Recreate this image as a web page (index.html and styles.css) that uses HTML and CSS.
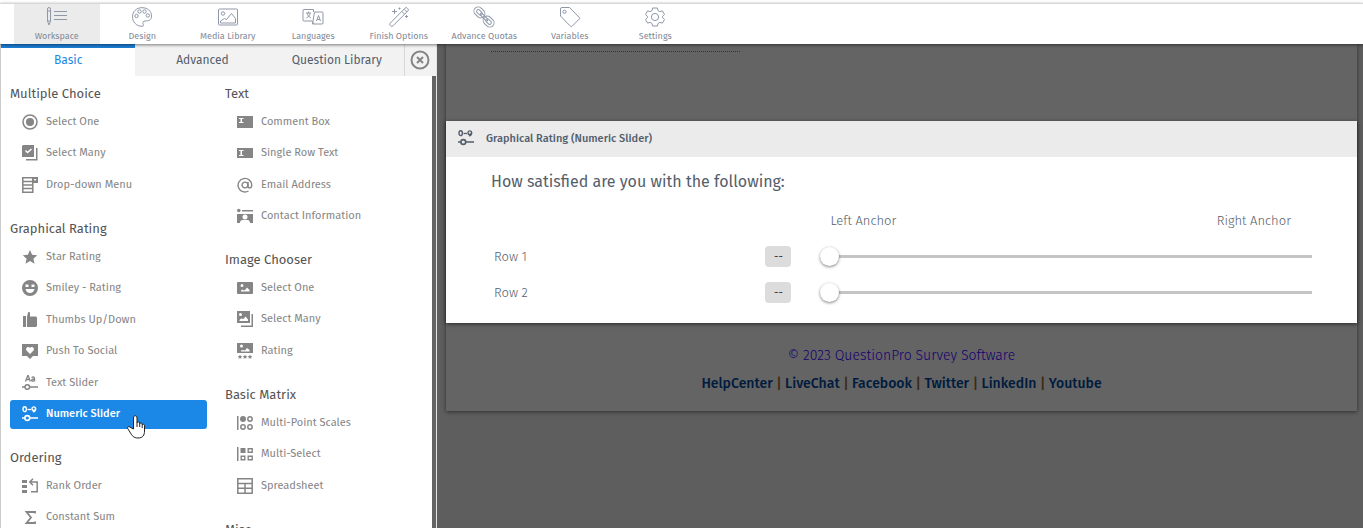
FILE: index.html
```html
<!DOCTYPE html>
<html lang="en">
<head>
  <meta charset="utf-8">
  <title>Survey Workspace</title>
  <link rel="stylesheet" href="styles.css">
</head>
<body>
  <!-- icons used more than once -->
  <svg class="defs" aria-hidden="true">
    <symbol id="numeric" viewBox="0 0 16 16">
      <g fill="none" stroke="currentColor">
        <ellipse cx="2.700" cy="3.200" rx="1.700" ry="2.400" stroke-width="1.400"/>
        <path d="M5.500 3.500h3.500" stroke-width="1.300"/>
        <circle cx="11.800" cy="2.700" r="1.800" stroke-width="1.400"/>
        <path d="M13.600 2.700c0 2-.8 3-2.800 3.200" stroke-width="1.400"/>
        <circle cx="5.300" cy="12" r="2.400" stroke-width="1.600"/>
        <path d="M0 12h3M7.600 12H16" stroke-width="1.600"/>
      </g>
    </symbol>
    <symbol id="picture" viewBox="0 0 16 16">
      <path fill="currentColor" fill-rule="evenodd" d="M1 2h14a1 1 0 0 1 1 1v10a1 1 0 0 1-1 1H1a1 1 0 0 1-1-1V3a1 1 0 0 1 1-1zM3.500 5.500a1.500 1.500 0 1 0 3 0 1.500 1.500 0 1 0-3 0zM4 11.500h8.500V10L10 7.500l-2 2.500-1 .5-1.500-1L4 10.500z"/>
    </symbol>
  </svg>

  <header>
    <nav class="toolbar">
      <a href="#" class="current">
        <svg viewBox="0 0 20 20"><path d="M.5 2a1.500 1.500 0 0 1 3 0v12L2 18 .5 14zM.5 4h3M.5 14h3M7 4.500h13M7 8.500h13M7 12.500h13"/></svg>
        Workspace
      </a>
      <a href="#">
        <svg viewBox="0 0 20 20"><path d="M10 .7C4.500.7.5 4.500.5 9.500c0 5.500 4 9.800 9.500 9.800 2 0 1.500-1.800 1-2.800-.5-1.500.5-2.500 2-2.500 4 0 6.500-1 6.500-5C19.500 4 15.500.7 10 .7z"/><circle cx="4.500" cy="9" r="1.700"/><circle cx="7.500" cy="4.500" r="1.700"/><circle cx="12.500" cy="4.500" r="1.700"/><circle cx="15.800" cy="8.500" r="1.700"/></svg>
        Design
      </a>
      <a href="#">
        <svg viewBox="0 0 20 20"><rect x=".5" y="2" width="19" height="16" rx="1"/><circle cx="5" cy="6.500" r="1.700"/><path d="M2.500 16v-2l4-2.500 2 1 5-6 4 5V16z"/></svg>
        Media Library
      </a>
      <a href="#">
        <svg viewBox="0 0 20 20"><path d="M9 14H1a1 1 0 0 1-1-1V3.500a1 1 0 0 1 1-1h9.500V5M11.500 5H19a1 1 0 0 1 1 1v10a1 1 0 0 1-1 1H9.500zM3 6h5M5.500 4.500V6M3.500 11c2-1 3.500-3 3.500-5M4 6c.5 2 2 4 4 5M13.500 14l2-5.500 2 5.500M14.200 12.500h2.600M9 14l2 3"/></svg>
        Languages
      </a>
      <a href="#">
        <svg viewBox="0 0 20 20"><path d="M1.200 16.200 16 1.200a1.500 1.500 0 0 1 2.300 0l.5.500a1.500 1.500 0 0 1 0 2.300L4 18.800a1.500 1.500 0 0 1-2.300 0l-.5-.5a1.500 1.500 0 0 1 0-2.100zM12.800 4.400l2.800 2.800M15 2.200l2.800 2.800M5.500 2v5M3 4.500h5M10.500.5v2M9.500 1.500h2M17.500 8v3M16 9.500h3"/></svg>
        Finish Options
      </a>
      <a href="#">
        <svg viewBox="0 0 20 20"><g transform="rotate(45 10 10)"><rect x="-2.500" y="5.800" width="12" height="8.400" rx="4.200"/><rect x="10.500" y="5.800" width="12" height="8.400" rx="4.200"/><rect x=".3" y="8.300" width="6.500" height="3.400" rx="1.700"/><rect x="13.200" y="8.300" width="6.500" height="3.400" rx="1.700"/><rect x="5" y="8.800" width="10" height="2.400" rx="1.200"/></g></svg>
        Advance Quotas
      </a>
      <a href="#">
        <svg viewBox="0 0 20 20"><path d="M.5 2a1.500 1.500 0 0 1 1.500-1.500h7.500L19.300 10.500a1 1 0 0 1 0 1.500L12 19.300a1 1 0 0 1-1.500 0L.5 9z"/><circle cx="4.500" cy="4.800" r="1.600"/></svg>
        Variables
      </a>
      <a href="#">
        <svg viewBox="0 0 20 20"><path d="M7.600 1 12.400 1 13 3.600 14.800 4.600 17.400 3.900 19.500 7.500 17.600 9.200V10.800L19.500 12.500 17.400 16.100 14.800 15.400 13 16.400 12.400 19H7.600L7 16.400 5.200 15.400 2.600 16.100.5 12.500 2.400 10.800V9.200L.5 7.500 2.600 3.900 5.200 4.600 7 3.600z" stroke-linejoin="round"/><circle cx="10" cy="10" r="3.600"/></svg>
        Settings
      </a>
    </nav>
  </header>

  <div class="workspace">
    <aside>
      <div class="tabs">
        <button class="active">Basic</button>
        <button>Advanced</button>
        <button>Question Library</button>
        <button class="close" aria-label="Close">
          <svg viewBox="0 0 20 20"><circle cx="10" cy="10" r="8.500"/><path d="M7 7l6 6M13 7l-6 6"/></svg>
        </button>
      </div>

      <div class="panel">
        <div class="column">
          <section>
            <h3>Multiple Choice</h3>
            <ul>
              <li><a href="#"><svg viewBox="0 0 16 16"><circle cx="8" cy="8" r="7" fill="none" stroke="currentColor" stroke-width="1.500"/><circle cx="8" cy="8" r="4"/></svg>Select One</a></li>
              <li><a href="#"><svg viewBox="0 0 16 16"><path fill-rule="evenodd" d="M1 0h11v12H0V1zM3 6l2.500 2.500 4.500-4-1-1-3.500 3L4 5z"/><path d="M14 3h1.500v12.500H4V14h10z"/></svg>Select Many</a></li>
              <li><a href="#"><svg viewBox="0 0 16 16"><path fill="none" stroke="currentColor" stroke-width="1.500" d="M.8.8h10v14.500H.8zM1 4.500h10M1 8h10M1 11.500h10"/><path fill-rule="evenodd" d="M10 0h6v6h-6zM11.500 2l1.500 2 1.500-2z"/></svg>Drop-down Menu</a></li>
            </ul>
          </section>
          <section>
            <h3>Graphical Rating</h3>
            <ul>
              <li><a href="#"><svg viewBox="0 0 16 16"><path d="M8 1l2.100 4.700 5.100.5-3.800 3.500 1.100 5L8 12.100l-4.500 2.600 1.100-5L.8 6.200l5.100-.5z"/></svg>Star Rating</a></li>
              <li><a href="#"><svg viewBox="0 0 16 16"><path fill-rule="evenodd" d="M8 0a8 8 0 1 0 0 16A8 8 0 0 0 8 0zM3.500 4.500h3V7h-3zM9.500 4.500h3V7h-3zM3.500 9h9c-.5 2.700-2.200 4-4.500 4s-4-1.300-4.500-4z"/></svg>Smiley - Rating</a></li>
              <li><a href="#"><svg viewBox="0 0 16 16"><path d="M1 4h3v11H1zM5 5l1-4.500C6.300-.5 8-.3 8 1v3.500h6l1 1V14l-1 1H5z"/></svg>Thumbs Up/Down</a></li>
              <li><a href="#"><svg viewBox="0 0 16 16"><path fill-rule="evenodd" d="M0 1h16v12h-5l-3 3-3-3H0zM8 11l3.500-3.500c1.500-2-1.500-5-3.500-2.500C6 2.500 3 5.500 4.500 7.500z"/></svg>Push To Social</a></li>
              <li><a href="#"><svg viewBox="0 0 16 16"><path fill="none" stroke="currentColor" stroke-width="1.300" d="M3.500 6.500 6 0l2.300 6.500M4.200 4.500h3.500M9.500 2.500c2-1 3-.3 3 1v3M12.500 4c-4 0-3.500 3-.5 2"/><path fill="none" stroke="currentColor" stroke-width="1.500" d="M0 12h3M7.600 12H16"/><circle cx="5.300" cy="12" r="2.300" fill="none" stroke="currentColor" stroke-width="1.500"/></svg>Text Slider</a></li>
              <li><a href="#" class="selected"><svg><use href="#numeric"/></svg>Numeric Slider
                <svg class="pointer" viewBox="0 0 18 24"><path d="M6.500 14V3c0-3 3.500-3 3.500 0v5c0-1.500 2.700-1.500 2.700 0v1c0-1.500 2.500-1.200 2.500.3V10c0-1.300 2.300-1 2.300.5V16c0 4-1.500 7-6.500 7-4.500 0-6-2.500-7.500-5L.7 13.500c-.8-1.800 1.300-2.500 2.500-1.200z"/><path d="M10 8v4M12.700 9v3M15.200 10v3"/></svg></a></li>
            </ul>
          </section>
          <section>
            <h3>Ordering</h3>
            <ul>
              <li><a href="#"><svg viewBox="0 0 16 16"><path d="M0 2h5v3H0zM0 7h5v3H0zM0 12h5v3H0z"/><path fill="none" stroke="currentColor" stroke-width="1.500" d="M9 13.800h6.200V4H8M11 .8 7.800 4 11 7.200"/></svg>Rank Order</a></li>
              <li><a href="#"><svg viewBox="0 0 16 16"><path fill="none" stroke="currentColor" stroke-width="1.800" d="M13 4.500V3H4.500L9 8.500 4.500 14H13v-1.500"/></svg>Constant Sum</a></li>
            </ul>
          </section>
        </div>

        <div class="column">
          <section>
            <h3>Text</h3>
            <ul>
              <li><a href="#"><svg viewBox="0 0 16 16"><path fill-rule="evenodd" d="M0 2h16v12H0zM2 4v1h1.500v3H2v1h4.500V8H5V5h1.500V4z"/></svg>Comment Box</a></li>
              <li><a href="#"><svg viewBox="0 0 16 16"><path fill-rule="evenodd" d="M0 3h16v10H0zM2 5v1h1.500v4H2v1h4.500v-1H5V6h1.500V5z"/></svg>Single Row Text</a></li>
              <li><a href="#"><svg viewBox="0 0 16 16"><path fill="none" stroke="currentColor" stroke-width="1.400" d="M11.500 14A6.800 6.800 0 1 1 14.700 8c0 4-3.700 3.500-3.700 1V5"/><circle cx="8" cy="8" r="2.900" fill="none" stroke="currentColor" stroke-width="1.400"/></svg>Email Address</a></li>
              <li><a href="#"><svg viewBox="0 0 16 16"><circle cx="1.800" cy="2.500" r="1.800"/><path d="M5 2h11v1.500H5z"/><path fill-rule="evenodd" d="M0 6h16v9h-3c0-1.500-.5-2.500-2-3H5c-1.500.5-2 1.500-2 3H0zM5.500 9a2.500 2.500 0 1 0 5 0 2.500 2.500 0 1 0-5 0z"/></svg>Contact Information</a></li>
            </ul>
          </section>
          <section>
            <h3>Image Chooser</h3>
            <ul>
              <li><a href="#"><svg><use href="#picture"/></svg>Select One</a></li>
              <li><a href="#"><svg viewBox="0 0 16 16"><path fill-rule="evenodd" d="M0 0h13v12H0zM2 3.500a1.500 1.500 0 1 0 3 0 1.500 1.500 0 1 0-3 0zM2.500 10H11V8.500L8.500 5.500 6.500 8 4 7.500 2.500 9z"/><path d="M14.500 3H16v13H4v-1.500h10.500z"/></svg>Select Many</a></li>
              <li><a href="#"><svg viewBox="0 0 16 16"><path fill-rule="evenodd" d="M0 0h16v10H0zM3 3a1.500 1.500 0 1 0 3 0 1.500 1.500 0 1 0-3 0zM4 8.500h8.500V7L10 5 8 7.500 6 7 4 7.500z"/><path d="M3 11.500l.7 1.500 1.500.2-1 1 .2 1.600L3 15l-1.400.8.2-1.600-1-1 1.500-.2zM8 11.500l.7 1.500 1.500.2-1 1 .2 1.600L8 15l-1.400.8.2-1.600-1-1 1.500-.2zM13 11.500l.7 1.500 1.500.2-1 1 .2 1.600L13 15l-1.400.8.2-1.600-1-1 1.500-.2z"/></svg>Rating</a></li>
            </ul>
          </section>
          <section>
            <h3>Basic Matrix</h3>
            <ul>
              <li><a href="#"><svg viewBox="0 0 16 16"><path d="M0 1h1.500v14H0z"/><circle cx="6" cy="4" r="3"/><g fill="none" stroke="currentColor" stroke-width="1.500"><circle cx="13" cy="4" r="2.200"/><circle cx="6" cy="12" r="2.200"/><circle cx="13" cy="12" r="2.200"/></g></svg>Multi-Point Scales</a></li>
              <li><a href="#"><svg viewBox="0 0 16 16"><path d="M0 1h1.500v14H0zM3.500 2h5v5h-5z"/><path fill="none" stroke="currentColor" stroke-width="1.400" d="M11.200 2.700h4v3.600h-4zM4.200 10.200h3.600v3.600H4.200zM11.200 10.200h4v3.600h-4z"/></svg>Multi-Select</a></li>
              <li><a href="#"><svg viewBox="0 0 16 16"><path fill="none" stroke="currentColor" stroke-width="1.500" d="M.8.8h14.400v14.400H.8zM1 5.500h14M1 10.300h14M8 5.500V15"/></svg>Spreadsheet</a></li>
            </ul>
          </section>
          <section>
            <h3>Misc</h3>
          </section>
        </div>
      </div>
    </aside>

    <main>
      <div class="survey">
        <div class="previous"><div class="answer-line"></div></div>

        <article class="question">
          <h2><svg><use href="#numeric"/></svg>Graphical Rating (Numeric Slider)</h2>
          <div class="question-body">
            <p class="question-text">How satisfied are you with the following:</p>
            <div class="anchors"><span>Left Anchor</span><span>Right Anchor</span></div>
            <div class="row">
              <label for="row1">Row 1</label>
              <output for="row1">--</output>
              <input type="range" id="row1" min="0" max="100" value="0">
            </div>
            <div class="row">
              <label for="row2">Row 2</label>
              <output for="row2">--</output>
              <input type="range" id="row2" min="0" max="100" value="0">
            </div>
          </div>
        </article>

        <footer>
          <p><a href="#" class="copyright">© 2023 QuestionPro Survey Software</a></p>
          <p class="links"><a href="#">HelpCenter</a> | <a href="#">LiveChat</a> | <a href="#">Facebook</a> | <a href="#">Twitter</a> | <a href="#">LinkedIn</a> | <a href="#">Youtube</a></p>
        </footer>
      </div>
    </main>
  </div>
</body>
</html>
```
FILE: styles.css
```css
* {
  box-sizing: border-box;
}
body {
  margin: 0;
  height: 100vh;
  display: flex;
  flex-direction: column;
  overflow: hidden;
  font-family: "Fira Sans", Roboto, sans-serif;
  font-size: 11px;
  color: #545e6b;
  background-color: #fff;
}
h2, h3, p, ul {
  margin: 0;
  padding: 0;
}
ul {
  list-style: none;
}
a {
  color: inherit;
  text-decoration: none;
}
.defs {
  display: none;
}

/* top toolbar */
header {
  position: relative;
  z-index: 1;
  margin-top: 3px;
  padding-left: 14px;
  border-top: 1px solid #d8d8d8;
  background-color: #fff;
  box-shadow: 0 1px 3px rgba(0, 0, 0, .5);
}
.toolbar {
  width: 684px;
  display: grid;
  grid-template-columns: repeat(8, 1fr);
}
.toolbar a {
  height: 40px;
  padding-top: 3px;
  display: flex;
  flex-direction: column;
  align-items: center;
  gap: 3px;
  font-size: 9px;
  line-height: 12px;
  white-space: nowrap;
  color: #7f8a99;
}
.toolbar .current {
  background-color: #ebebeb;
}
.toolbar svg {
  width: 20px;
  height: 20px;
  overflow: visible;
  fill: none;
  stroke: #8f98a8;
}

.workspace {
  flex: 1;
  min-height: 0;
  display: flex;
}

/* question type picker */
aside {
  width: 437px;
  flex-shrink: 0;
  display: flex;
  flex-direction: column;
  overflow: hidden;
  border-left: 1px solid #ccc;
  border-right: 1px solid #e4e4e4;
}
.tabs {
  flex-shrink: 0;
  height: 32px;
  display: grid;
  grid-template-columns: 1fr 1fr 1fr 32px;
}
.tabs button {
  padding: 0 0 4px;
  border: 0;
  border-top: 4px solid #f2f2f2;
  background-color: #f2f2f2;
  font: 12px/24px "Fira Sans", Roboto, sans-serif;
  color: #545e6b;
}
.tabs .active {
  border-top-color: #1b7fd6;
  background-color: #fff;
  color: #1b87e6;
}
.tabs .close {
  display: grid;
  place-items: center;
  padding: 0;
  border-top: 0;
  border-left: 1px solid #d8d8d8;
}
.close svg {
  width: 20px;
  height: 20px;
  fill: none;
  stroke: #858585;
  stroke-width: 2;
}
.panel {
  flex: 1;
  display: grid;
  grid-template-columns: 1fr 1fr;
  gap: 18px;
  padding: 8px 10px 0 9px;
  border-right: 4px solid #646464;
}
section {
  margin-bottom: 19px;
}
h3 {
  margin-bottom: 4px;
  font-size: 13px;
  font-weight: 400;
  line-height: 20px;
  color: #545454;
}
.panel li {
  margin-top: 3px;
}
.panel li:nth-child(even) {
  margin-top: 2px;
}
.panel li:first-child {
  margin-top: 0;
}
.panel li a {
  position: relative;
  height: 29px;
  display: flex;
  align-items: center;
  gap: 8px;
  padding: 0 12px 2px;
  border-radius: 3px;
  color: #858585;
}
.panel li svg {
  width: 16px;
  height: 16px;
  fill: currentColor;
}
.panel li .selected {
  background-color: #1b87e6;
  font-weight: 500;
  color: #fff;
}
.panel li .pointer {
  position: absolute;
  left: 117px;
  top: 15px;
  width: 18px;
  height: 24px;
  z-index: 1;
  fill: #fff;
  stroke: #222;
}

/* survey preview behind the overlay */
main {
  flex: 1;
  min-width: 0;
  padding: 0 6px 0 9px;
  background-color: #5e5e5e;
}
.survey {
  background-color: #646464;
  box-shadow: 0 1px 4px rgba(0, 0, 0, .5);
}
.previous {
  height: 77px;
  padding: 7px 45px;
}
.answer-line {
  width: 249px;
  border-bottom: 1px dotted #333;
}
.question {
  background-color: #fff;
  box-shadow: 0 1px 4px rgba(0, 0, 0, .6);
}
.question h2 {
  height: 36px;
  display: flex;
  align-items: center;
  gap: 12px;
  padding: 0 12px 2px;
  background-color: #ebebeb;
  font-size: 11px;
  font-weight: 500;
}
.question h2 svg {
  width: 16px;
  height: 16px;
}
.question-body {
  padding: 12px 45px;
}
.question-text {
  font-size: 16px;
  line-height: 26px;
}
.anchors {
  width: 60%;
  margin-left: auto;
  padding: 16px 21px 7px 11px;
  display: flex;
  justify-content: space-between;
  font-size: 13px;
  font-weight: 300;
  line-height: 20px;
}
.row {
  height: 36px;
  display: grid;
  grid-template-columns: 1fr 54px 60%;
  align-items: center;
}
.row:last-child {
  margin-bottom: 1px;
}
.row label {
  padding-left: 3px;
  font-size: 13px;
  font-weight: 300;
}
.row output {
  width: 26px;
  border-radius: 4px;
  background-color: #dcdcdc;
  text-align: center;
  line-height: 21px;
  color: #333;
}
.row input {
  -webkit-appearance: none;
  appearance: none;
  height: 20px;
  margin: 0 0 0 1px;
  background: none;
}
.row input::-webkit-slider-runnable-track {
  height: 3px;
  background-color: #c4c4c4;
}
.row input::-webkit-slider-thumb {
  -webkit-appearance: none;
  width: 19px;
  height: 19px;
  margin-top: -8px;
  border-radius: 50%;
  background-color: #fff;
  box-shadow: 0 1px 3px rgba(0, 0, 0, .5);
}
footer {
  padding: 19px 0 13px;
  text-align: center;
  font-size: 14px;
  line-height: 28px;
}
.copyright {
  font-weight: 300;
  color: #14006e;
}
.links {
  font-weight: 500;
  color: #3c2a12;
}
.links a {
  color: #001b3d;
}
```
